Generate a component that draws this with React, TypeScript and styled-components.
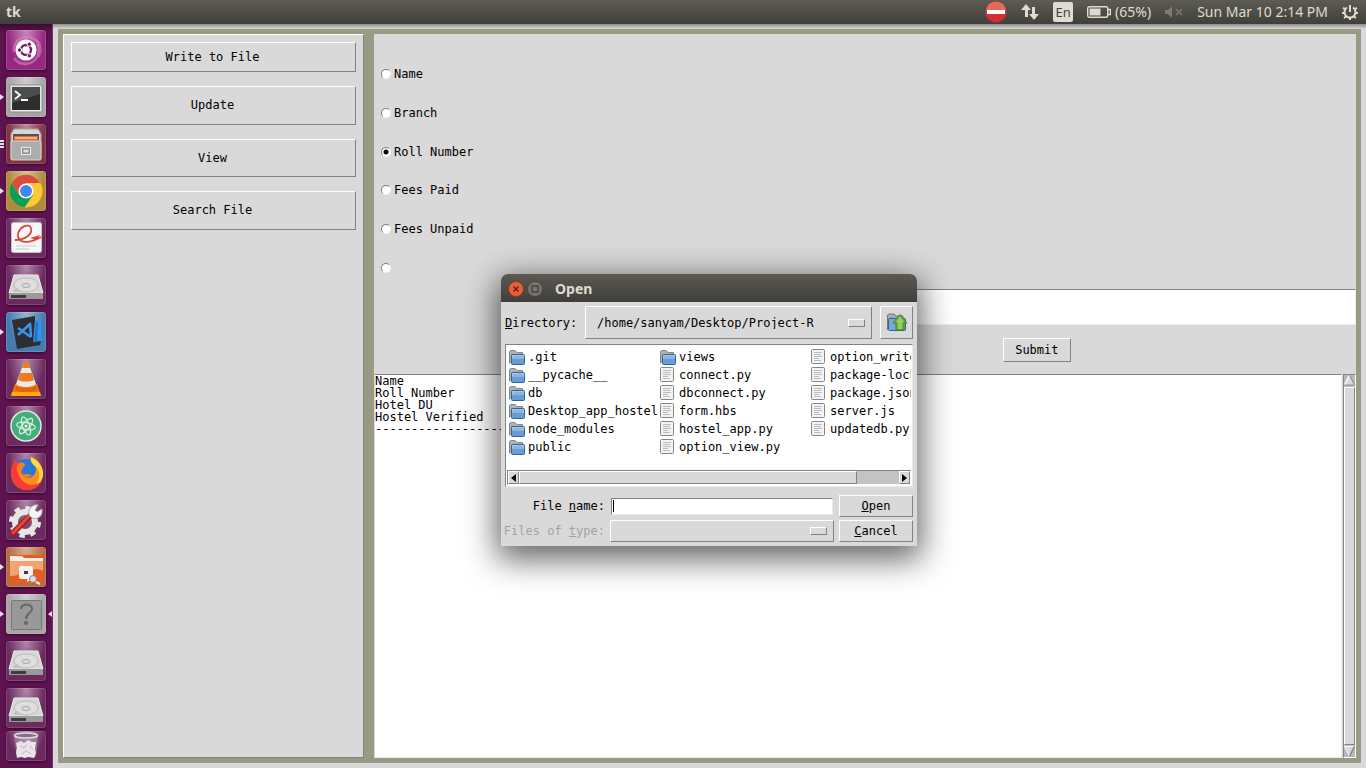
import React from 'react';
import styled, { createGlobalStyle, css } from 'styled-components';

const face = '#d9d9d9';
const light = '#ffffff';
const dark = '#828282';
const olive = '#999985';
const mono = '"DejaVu Sans Mono", "Liberation Mono", monospace';
const ui = '"Noto Sans", "Open Sans", sans-serif';

const GlobalStyle = createGlobalStyle`
  * { box-sizing: border-box; }
  body { margin: 0; background: ${face}; color: #000; font: 12px/12px ${mono}; overflow: hidden; }
  button, input, select, textarea { font: inherit; color: inherit; margin: 0; padding: 0; border: 0; border-radius: 0; outline: none; }
  ul { list-style: none; margin: 0; padding: 0; }
`;

const raised = css`
  border: 1px solid;
  border-color: ${light} ${dark} ${dark} ${light};
`;
const sunken = css`
  border: 1px solid;
  border-color: ${dark} #ebebeb #ebebeb ${dark};
`;

const Screen = styled.div`
  position: relative;
  display: flex;
  flex-direction: column;
  height: 100vh;
`;

/* ---------- top panel ---------- */

const TopBar = styled.header`
  display: flex;
  align-items: center;
  justify-content: space-between;
  flex: none;
  height: 24px;
  padding: 0 8px 0 6px;
  color: #dfdbd2;
  font: 14px/24px ${ui};
  background: linear-gradient(#5d5b54, #403f3a);
`;
const AppName = styled.strong`
  font-weight: 700;
`;
const Indicators = styled.div`
  display: flex;
  align-items: center;
  gap: 14px;
  svg { display: block; }
`;
const Indicator = styled.button`
  display: flex;
  align-items: center;
  gap: 4px;
  height: 24px;
  background: none;
`;
const Lang = styled.span`
  width: 20px;
  height: 20px;
  border-radius: 2px;
  background: #dfdbd2;
  color: #45443f;
  font-size: 13px;
  line-height: 20px;
  text-align: center;
`;

/* ---------- launcher ---------- */

const Desktop = styled.div`
  display: flex;
  flex: 1;
  min-height: 0;
`;
const Launcher = styled.nav`
  flex: none;
  width: 53px;
  padding: 6px 0 0 6px;
  overflow: hidden;
  background: linear-gradient(#3d0a35, #5f1250 8px);
  border-right: 1px solid #743265;
`;
const LauncherList = styled.ul`
  display: flex;
  flex-direction: column;
  gap: 7px;
  margin-bottom: 3px;
`;
const LauncherItem = styled.li`
  position: relative;
  height: 40px;
`;
const Tile = styled.button<{ $tint: string; $short?: boolean }>`
  display: block;
  width: 40px;
  height: ${(p) => (p.$short ? 30 : 40)}px;
  border-radius: 3px;
  overflow: hidden;
  box-shadow: inset 0 0 0 1px rgba(255, 255, 255, 0.14), 0 1px 3px rgba(0, 0, 0, 0.5);
  background: radial-gradient(ellipse at 50% 0, rgba(255, 255, 255, 0.45), rgba(255, 255, 255, 0) 65%), ${(p) => p.$tint};
  svg { display: block; }
`;
const Pip = styled.span<{ $side: 'left' | 'right' }>`
  position: absolute;
  top: 17px;
  ${(p) => (p.$side === 'left' ? 'left: -6px;' : 'right: 0;')}
  border: solid transparent;
  border-width: 3px 0;
  ${(p) => (p.$side === 'left' ? 'border-left: 4px solid #e6dfe4;' : 'border-right: 4px solid #e6dfe4;')}
`;
const Bars = styled.span`
  position: absolute;
  top: 16px;
  left: -6px;
  width: 4px;
  height: 8px;
  background: repeating-linear-gradient(#e6dfe4 0 2px, transparent 2px 3px);
`;

/* ---------- main window ---------- */

const Main = styled.main`
  display: flex;
  flex: 1;
  min-width: 0;
  padding: 5px;
  background: linear-gradient(#8d8d8d, ${face} 5px);
`;
const Frame = styled.div`
  display: flex;
  flex: 1;
  gap: 10px;
  min-width: 0;
  padding: 5px;
  background: ${olive};
`;
const SidePanel = styled.section`
  ${raised}
  display: flex;
  flex-direction: column;
  gap: 14px;
  flex: none;
  width: 301px;
  padding: 7px;
  background: ${face};
`;
const TkButton = styled.button<{ $h: number; $w?: number }>`
  ${raised}
  flex: none;
  height: ${(p) => p.$h}px;
  ${(p) => p.$w && `width: ${p.$w}px;`}
  background: ${face};
  text-align: center;
  text-underline-offset: 1px;
`;
const SideButton = styled(TkButton)`
  padding: 0 2px 1px 0;
`;
const Content = styled.section`
  display: flex;
  flex-direction: column;
  flex: 1;
  min-width: 0;
  padding-top: 21px;
  background: ${face};
`;
const Choices = styled.div`
  display: flex;
  flex-direction: column;
  flex: none;
  height: 232px;
  margin-bottom: 2px;
  padding: 0 7px;
`;
const Choice = styled.label`
  display: flex;
  align-items: center;
  gap: 3px;
  flex: 1;
`;
const Radio = styled.input`
  appearance: none;
  width: 10px;
  height: 10px;
  border: 1px solid;
  border-color: ${dark} #f4f4f4 #f4f4f4 ${dark};
  border-radius: 50%;
  background: ${light};
  &:checked { background: radial-gradient(circle, #000 2px, ${light} 3px); }
`;
const Query = styled.form`
  display: flex;
  flex-direction: column;
  align-items: center;
  gap: 13px;
  width: 65%;
  margin-left: auto;
  padding-bottom: 12px;
`;
const Entry = styled.input`
  ${sunken}
  background: ${light};
`;
const QueryEntry = styled(Entry)`
  width: 100%;
  height: 36px;
`;
const Results = styled.div`
  display: flex;
  flex: 1;
  gap: 1px;
  min-height: 0;
  padding-left: 1px;
`;
const Output = styled.textarea`
  ${sunken}
  border-left: 0;
  flex: 1;
  min-width: 0;
  resize: none;
  overflow: hidden;
  background: ${light};
`;

const Scroll = styled.div<{ $across?: boolean }>`
  display: flex;
  flex-direction: ${(p) => (p.$across ? 'row' : 'column')};
  flex: none;
  gap: 1px;
  ${(p) => (p.$across ? 'height: 15px;' : 'width: 13px;')}
  border: 1px solid;
  border-color: ${dark} ${light} ${light} ${dark};
  background: #c3c3c3;
`;
const Arrow = styled.button`
  flex: none;
  display: flex;
  align-items: center;
  justify-content: center;
  background: #b8b8b8;
`;
const RaisedArrow = styled(Arrow)`
  ${raised}
  width: 11px;
  background: ${face};
`;
const Thumb = styled.div<{ $size: number }>`
  ${raised}
  flex: 0 1 ${(p) => p.$size}%;
  background: ${face};
`;
const Track = styled.div`
  display: flex;
  flex: 1;
`;

/* ---------- file dialog ---------- */

const Dialog = styled.div`
  position: absolute;
  left: 501px;
  top: 274px;
  width: 416px;
  border-radius: 7px 7px 0 0;
  background: ${face};
  box-shadow: 0 9px 32px 4px rgba(0, 0, 0, 0.62);
`;
const TitleBar = styled.div`
  display: flex;
  align-items: center;
  gap: 3px;
  height: 28px;
  padding: 2px 7px 0;
  border-radius: 7px 7px 0 0;
  color: #dfdbd2;
  background: linear-gradient(#5b5952, #3f3e39);
`;
const Title = styled.h1`
  margin: 0 0 0 9px;
  font: 700 14px/26px ${ui};
`;
const WindowButton = styled.button`
  width: 16px;
  height: 16px;
  background: none;
  svg { display: block; }
`;
const DialogBody = styled.div`
  display: flex;
  flex-direction: column;
  padding: 4px;
  text-underline-offset: 1px;
`;
const DirectoryRow = styled.div`
  display: flex;
  align-items: center;
  margin-bottom: 5px;
`;
const DirectoryLabel = styled.label`
  width: 80px;
  white-space: nowrap;
`;
const MenuBox = styled.div<{ $h: number; $pad: number }>`
  ${raised}
  display: flex;
  align-items: center;
  flex: 1;
  min-width: 0;
  height: ${(p) => p.$h}px;
  padding: 0 6px 0 ${(p) => p.$pad}px;
  &::after {
    ${raised}
    content: '';
    flex: none;
    width: 15px;
    height: 6px;
  }
`;
const Menu = styled.select`
  appearance: none;
  flex: 1;
  min-width: 0;
  height: 100%;
  background: transparent;
`;
const UpButton = styled(TkButton)`
  display: flex;
  align-items: center;
  justify-content: center;
  margin-left: 8px;
`;
const ListBox = styled.div`
  ${sunken}
  display: flex;
  flex-direction: column;
  height: 143px;
  padding: 3px 1px 1px 3px;
  margin-bottom: 8px;
  background: ${light};
`;
const Files = styled.ul`
  display: grid;
  grid-template-rows: repeat(6, 18px);
  grid-auto-flow: column;
  grid-auto-columns: 151px;
  flex: 1;
  overflow: hidden;
`;
const FileItem = styled.li`
  display: flex;
  align-items: center;
  gap: 2px;
  white-space: nowrap;
  svg { flex: none; display: block; }
`;
const FileScroll = styled(Scroll)`
  margin-left: -2px;
  gap: 0;
`;
const Fields = styled.div`
  display: grid;
  grid-template-columns: 100px 1fr 74px;
  column-gap: 5px;
  row-gap: 3px;
  align-items: center;
`;
const FieldLabel = styled.label<{ $muted?: boolean }>`
  justify-self: end;
  white-space: nowrap;
  ${(p) => p.$muted && 'color: #a3a3a3;'}
`;
const NameBox = styled.div`
  ${sunken}
  display: flex;
  align-items: center;
  height: 17px;
  margin: 0 1px;
  padding: 1px;
  background: ${light};
`;
const Caret = styled.span`
  width: 1px;
  height: 12px;
  background: #000;
`;
const NameInput = styled.input`
  flex: 1;
  min-width: 0;
  background: transparent;
`;

/* ---------- drawings ---------- */

const Svg = ({ w = 40, h = 40, box, children }: { w?: number; h?: number; box?: string; children: React.ReactNode }) => (
  <svg width={w} height={h} viewBox={box ?? `0 0 ${w} ${h}`} fill="none" aria-hidden="true">{children}</svg>
);

const UbuntuIcon = () => (
  <Svg>
    <path d="M8 22C7 10 18 4 28 9c7 3 8 12 4 18M31 14c5 9-1 19-11 20-6 0-10-3-12-6" stroke="#d58cc4" strokeWidth="2.500" opacity=".55" />
    <circle cx="20" cy="20" r="10.500" fill="#fff" />
    <circle cx="20" cy="20" r="5" stroke="#7a1c68" strokeWidth="2.400" />
    <g fill="#7a1c68" stroke="#fff">
      <circle cx="13.500" cy="20" r="2.200" /><circle cx="23.300" cy="14.200" r="2.200" /><circle cx="23.300" cy="25.800" r="2.200" />
    </g>
  </Svg>
);
const TerminalIcon = () => (
  <Svg>
    <rect x="4" y="8" width="32" height="27" rx="1" fill="#e8e8e8" stroke="#8d8d8d" />
    <rect x="6" y="10" width="28" height="23" fill="#2c2e2c" />
    <path d="M6 10h28v7L6 26z" fill="#4b4e4b" />
    <path d="M9 14l5 4-5 4M15 23h7" stroke="#fff" strokeWidth="1.800" />
  </Svg>
);
const FilesIcon = () => (
  <Svg>
    <path d="M8 5h24l3 5v24H5V10z" fill="#d6d6d4" stroke="#a3a3a1" />
    <rect x="7" y="10" width="26" height="9" fill="#58514c" />
    <path d="M8 12h24v6H8z" fill="#e8662a" /><path d="M9 14h22" stroke="#fff" />
    <rect x="5" y="17" width="30" height="19" rx="1" fill="#adadab" stroke="#d4d4d2" />
    <rect x="15.500" y="23.500" width="9" height="7" fill="#8c8c8a" stroke="#eee" />
    <rect x="17.500" y="25.500" width="5" height="3" fill="#ddd" />
  </Svg>
);
const ChromeIcon = () => (
  <Svg>
    <circle cx="20" cy="20" r="16.500" fill="#fcc934" />
    <path d="M20 12h14.300A16.500 16.500 0 0 0 5.700 11.800L13 24z" fill="#dd4b3e" />
    <path d="M5.700 11.800A16.500 16.500 0 0 0 18.500 36.400L27 24l-14 0z" fill="#109d58" />
    <circle cx="20" cy="20" r="7.500" fill="#fff" /><circle cx="20" cy="20" r="6" fill="#4285f4" />
  </Svg>
);
const ReaderIcon = () => (
  <Svg>
    <rect x="5.500" y="4.500" width="30" height="30" rx="2" fill="#f7f7f7" stroke="#c9bcc7" />
    <path d="M9 22C19 22 27 16 25 10c-2-5-11-2-13 6-1 10 11 10 23 3" stroke="#d8473b" strokeWidth="1.800" />
    <path d="M24 20l10-3-3 5z" fill="#d8473b" />
    <path d="M10 28h20M10 31h13" stroke="#cbcbcb" />
  </Svg>
);
const DriveIcon = () => (
  <Svg>
    <path d="M8 10h24l5 18H3z" fill="#d6d6d6" stroke="#eee" />
    <path d="M3 28h34v6H3z" fill="#9a9a9a" /><path d="M5 30h15v3H5z" fill="#3d3d3d" />
    <ellipse cx="20" cy="20" rx="12" ry="7" fill="#dedede" stroke="#bdbdbd" />
    <ellipse cx="20" cy="20.500" rx="4" ry="2" stroke="#a6a6a6" />
    <path d="M12 23l-4 3h7" stroke="#b5b5b5" />
  </Svg>
);
const CodeIcon = () => (
  <Svg>
    <path d="M29 8l6 1 1 20-8 5z" fill="#2f93ee" />
    <path d="M6 8l23-4v4l-2 22 8-1-1 4-23 4z" fill="#2d2e31" />
    <path d="M30 10h2l-1 19-3 2z" fill="#1c74c8" />
    <path d="M12 16l13 9M12 23l12-11 1 13" stroke="#3b94e8" strokeWidth="2.600" strokeLinejoin="round" />
  </Svg>
);
const ConeIcon = () => (
  <Svg>
    <path d="M9 25h22l4 12H5z" fill="#f0790f" /><path d="M6 33h28l1 4H5z" fill="#ffa90a" />
    <path d="M18 3h4l8 22c-3 4-17 4-20 0z" fill="#e9e9e9" />
    <path d="M18 3h4l2 6h-8zM14 14h12l2 7c-4 2-12 2-16 0z" fill="#ef7c1a" />
    <path d="M10 27c4 3 16 3 20 0l1 4c-5 3-17 3-22 0z" fill="#e2620d" />
  </Svg>
);
const AtomIcon = () => (
  <Svg>
    <circle cx="20" cy="20" r="15" fill="#45ad79" stroke="#e3e9e4" strokeWidth="1.500" />
    <g stroke="#d9f2e3" strokeWidth="1.200">
      <ellipse cx="20" cy="20" rx="9.500" ry="3.500" transform="rotate(10 20 20)" />
      <ellipse cx="20" cy="20" rx="9.500" ry="3.500" transform="rotate(70 20 20)" />
      <ellipse cx="20" cy="20" rx="9.500" ry="3.500" transform="rotate(130 20 20)" />
    </g>
    <circle cx="20" cy="20" r="1.500" fill="#fff" />
  </Svg>
);
const FirefoxIcon = () => (
  <Svg>
    <circle cx="20" cy="17" r="11" fill="#2878d8" />
    <path d="M25 4c8 3 12 9 12 17 0 9-7 16-16 16S5 30 5 20c0-5 2-9 4-13l3 4c3-2 6-1 7 1l-3 4-1 3c3 6 8 8 12 4 4-4 4-9 0-14-2-2-3-3-2-5z" fill="#ff8f1c" />
    <path d="M9 7C5 13 4 20 6 26c3 8 10 12 18 11 5-1 9-4 11-8-6 4-13 4-18-1-5-4-6-11-4-16l-1-1z" fill="#f93a37" />
    <path d="M12 11c4-3 7-1 7 1l-3 4-1 3c1 3 3 3 6 2l5 1c-2 3-7 4-11 1-5-4-5-8-3-12z" fill="#ff7b1c" />
    <path d="M25 4c8 3 13 12 12 18-1 5-3 7-6 9 3-7 3-13-1-17-4-3-6-6-5-10z" fill="#ffd93e" />
  </Svg>
);
const SettingsIcon = () => (
  <Svg>
    <circle cx="19" cy="22" r="13" stroke="#e6e6e6" strokeWidth="6" strokeDasharray="5 5.200" />
    <circle cx="19" cy="22" r="10" stroke="#e6e6e6" strokeWidth="6" />
    <path d="M7 33L25 15" stroke="#a81b18" strokeWidth="6" strokeLinecap="round" />
    <path d="M7 33L24 15" stroke="#e2483c" strokeWidth="3" strokeLinecap="round" />
    <path d="M23 15c-1-6 3-11 9-10l-3 5 2 2 5-3c1 7-4 11-10 9z" fill="#f4f4f4" stroke="#aaa" />
  </Svg>
);
const ShareIcon = () => (
  <Svg>
    <rect x="4" y="8" width="33" height="28" fill="#e95b20" />
    <path d="M4 14h33v10C26 18 15 30 4 29z" fill="#f3a270" />
    <path d="M4 9h12l2 2h19v3H4z" fill="#f7eee9" />
    <rect x="13" y="19" width="14" height="13" rx="2" fill="#f4f1ee" /><path d="M18 24h4v3h-4z" fill="#3b3b36" />
    <path d="M21 34l5-3M30 35l4 2" stroke="#f4f1ee" strokeWidth="2" /><circle cx="27" cy="32" r="3.500" fill="#ddd" stroke="#888" />
  </Svg>
);
const UnknownIcon = () => (
  <Svg>
    <rect x="5.500" y="6.500" width="30" height="29" rx="1" fill="#999" stroke="#777" />
    <path d="M15 15c0-6 11-6 11 0 0 4-6 4-6 10" stroke="#666" strokeWidth="2" /><circle cx="20" cy="29" r="2" fill="#666" />
  </Svg>
);
const TrashIcon = () => (
  <Svg h={30}>
    <path d="M8 5h24l-2 21H11z" fill="#c9b4c5" opacity=".4" />
    <ellipse cx="20" cy="4.500" rx="11.500" ry="2.500" fill="#8d6b87" stroke="#ddd" strokeWidth="1.500" />
    <path d="M10 12l5-2 3 2 4-3 4 2 4 0-1 7 1 4-2 5-6-1-3 1-4-1-4 1-1-6 1-4z" fill="#e9e4e8" />
    <path d="M14 15l4 2 3-3M16 23l4-3 5 3M24 15l3 3" stroke="#c3b3c0" />
  </Svg>
);

const FolderIcon = () => (
  <Svg w={17} h={16} box="0 -1 17 16">
    <path d="M.5 13.500v-12L2 .5h4l2 2h5.500v4" fill="#b0b0ae" stroke="#858583" />
    <rect x="2.500" y="4.500" width="13" height="10" rx="1" fill="#6b9dd2" stroke="#2a64a6" />
    <path d="M3 5h12v4H3z" fill="#8bb4de" />
    <path d="M3.500 8V5.500h11V8" stroke="#a9c7e6" />
  </Svg>
);
const PageIcon = () => (
  <Svg w={17} h={16}>
    <rect x=".5" y=".5" width="13" height="14" rx="1" fill="#f3f3f3" stroke="#868686" />
    <path d="M3 3.500h8M3 5.500h7M3 7.500h8M3 9.500h5M3 11.500h7" stroke="#bcbcbc" />
  </Svg>
);
const UpIcon = () => (
  <Svg w={22} h={20}>
    <path d="M1.500 17V2L3 1h5l2 2h7v6" fill="#aaa" stroke="#777" />
    <rect x="2.500" y="5.500" width="17" height="12" rx="1" fill="#78a8da" stroke="#2a64a6" />
    <path d="M14 1.500l7 8.500h-3v7h-8v-7H7z" fill="#70b33a" stroke="#46821b" />
    <path d="M14 3.500L18 9h-2v7h-4V9h-2z" fill="#95cf61" />
  </Svg>
);

type App = { name: string; tint: string; icon: React.ReactNode; running?: boolean; many?: boolean; active?: boolean };
const plum = '#6d2a60';
const apps: App[] = [
  { name: 'Dash', tint: '#972880', icon: <UbuntuIcon /> },
  { name: 'Terminal', tint: '#a9a3a8', icon: <TerminalIcon />, running: true },
  { name: 'Files', tint: '#813342', icon: <FilesIcon />, many: true },
  { name: 'Chrome', tint: '#b08b3d', icon: <ChromeIcon />, running: true },
  { name: 'Document Viewer', tint: plum, icon: <ReaderIcon /> },
  { name: 'Drive 1', tint: plum, icon: <DriveIcon /> },
  { name: 'Code', tint: '#447cae', icon: <CodeIcon />, running: true },
  { name: 'Media Player', tint: plum, icon: <ConeIcon /> },
  { name: 'Atom', tint: plum, icon: <AtomIcon /> },
  { name: 'Firefox', tint: plum, icon: <FirefoxIcon /> },
  { name: 'System Settings', tint: plum, icon: <SettingsIcon /> },
  { name: 'Shared Files', tint: '#b66c43', icon: <ShareIcon />, running: true },
  { name: 'tk', tint: '#aaa4a9', icon: <UnknownIcon />, running: true, active: true },
  { name: 'Drive 2', tint: plum, icon: <DriveIcon /> },
  { name: 'Drive 3', tint: plum, icon: <DriveIcon /> },
];

const folders = ['.git', '__pycache__', 'db', 'Desktop_app_hostel', 'node_modules', 'public', 'views'];
const files = ['connect.py', 'dbconnect.py', 'form.hbs', 'hostel_app.py', 'option_view.py', 'option_write', 'package-lock', 'package.json', 'server.js', 'updatedb.py'];
const choices = ['Name', 'Branch', 'Roll Number', 'Fees Paid', 'Fees Unpaid', ''];
const output = ['Name', 'Roll Number', 'Hotel DU', 'Hostel Verified', '----------------------------------------'].join('\n');

export default function App() {
  return (
    <Screen>
      <GlobalStyle />
      <TopBar>
        <AppName>tk</AppName>
        <Indicators>
          <Indicator aria-label="Do not disturb">
            <Svg w={22} h={22}>
              <circle cx="11" cy="11" r="10.500" fill="#d32f35" />
              <path d="M1 10a10 9.500 0 0 1 20 0z" fill="#e8685c" />
              <rect x="2" y="9" width="18" height="4" fill="#fff" />
            </Svg>
          </Indicator>
          <Indicator aria-label="Network">
            <Svg w={18} h={18}>
              <path d="M5 1l5 6H7v7H4V7H0zM13 17l-5-6h3V4h3v7h4z" fill="#dfdbd2" />
            </Svg>
          </Indicator>
          <Indicator aria-label="Keyboard layout"><Lang>En</Lang></Indicator>
          <Indicator>
            <Svg w={24} h={14}>
              <rect x=".7" y="1.700" width="20" height="10.600" rx="1.500" stroke="#dfdbd2" strokeWidth="1.400" />
              <rect x="2.500" y="3.500" width="11" height="7" fill="#dfdbd2" />
              <path d="M21 4.500h2.300v5H21" stroke="#dfdbd2" strokeWidth="1.400" />
            </Svg>
            (65%)
          </Indicator>
          <Indicator aria-label="Sound">
            <Svg w={18} h={14}>
              <path d="M0 5h3l4-4v12L3 9H0z" fill="#7d7b75" /><path d="M11 4l6 6M17 4l-6 6" stroke="#7d7b75" strokeWidth="1.600" />
            </Svg>
          </Indicator>
          <Indicator>Sun Mar 10 2:14 PM</Indicator>
          <Indicator aria-label="Session">
            <Svg w={16} h={16}>
              <path d="M5 3.500a5.500 5.500 0 1 0 6 0" stroke="#dfdbd2" strokeWidth="2" />
              <path d="M8 1v7M1 4l2 1M15 4l-2 1M0 9h2M14 9h2M2 14l2-1.500M14 14l-2-1.500M8 13.500V16" stroke="#dfdbd2" strokeWidth="2" />
            </Svg>
          </Indicator>
        </Indicators>
      </TopBar>

      <Desktop>
        <Launcher aria-label="Launcher">
          <LauncherList>
            {apps.map((a) => (
              <LauncherItem key={a.name}>
                <Tile $tint={a.tint} aria-label={a.name}>{a.icon}</Tile>
                {a.running && <Pip $side="left" />}
                {a.many && <Bars />}
                {a.active && <Pip $side="right" />}
              </LauncherItem>
            ))}
          </LauncherList>
          <Tile $tint={plum} $short aria-label="Trash"><TrashIcon /></Tile>
        </Launcher>

        <Main>
          <Frame>
            <SidePanel>
              <SideButton $h={30}>Write to File</SideButton>
              <SideButton $h={39}>Update</SideButton>
              <SideButton $h={38}>View</SideButton>
              <SideButton $h={39}>Search File</SideButton>
            </SidePanel>
            <Content>
              <Choices role="radiogroup" aria-label="Search by">
                {choices.map((c) => (
                  <Choice key={c || 'other'}>
                    <Radio type="radio" name="field" defaultChecked={c === 'Roll Number'} aria-label={c || 'Other'} />
                    {c}
                  </Choice>
                ))}
              </Choices>
              <Query onSubmit={(e) => e.preventDefault()}>
                <QueryEntry aria-label="Search value" />
                <TkButton $h={24} $w={68}>Submit</TkButton>
              </Query>
              <Results>
                <Output aria-label="Results" readOnly value={output} wrap="off" />
                <Scroll>
                  <Arrow aria-label="Scroll up">
                    <Svg w={11} h={11} box="0 0 12 12"><path d="M6 0L0 11.500h12z" fill={face} /><path d="M6 0L.5 11" stroke="#fff" strokeWidth="1.500" /><path d="M6 0l5.500 11H0" stroke={dark} /></Svg>
                  </Arrow>
                  <Track><Thumb $size={100} /></Track>
                  <Arrow aria-label="Scroll down">
                    <Svg w={11} h={11} box="0 0 12 12"><path d="M0 0h12L6 12z" fill={face} /><path d="M12 .5H.5L6 11" stroke="#fff" /><path d="M11.500 0L6 11.500" stroke={dark} strokeWidth="1.500" /></Svg>
                  </Arrow>
                </Scroll>
              </Results>
            </Content>
          </Frame>
        </Main>
      </Desktop>

      <Dialog role="dialog" aria-labelledby="dialog-title">
        <TitleBar>
          <WindowButton aria-label="Close">
            <Svg w={16} h={16}>
              <circle cx="8" cy="8" r="7.500" fill="#ea5f35" stroke="#8d3a20" /><path d="M5.500 5.500l5 5M10.500 5.500l-5 5" stroke="#4a2217" strokeWidth="1.200" />
            </Svg>
          </WindowButton>
          <WindowButton aria-label="Maximize">
            <Svg w={16} h={16}>
              <circle cx="8" cy="8" r="7.500" fill="#77756e" stroke="#4a4944" /><rect x="5" y="5" width="6" height="6" stroke="#3a3935" strokeWidth="1.200" />
            </Svg>
          </WindowButton>
          <Title id="dialog-title">Open</Title>
        </TitleBar>
        <DialogBody>
          <DirectoryRow>
            <DirectoryLabel htmlFor="directory"><u>D</u>irectory:</DirectoryLabel>
            <MenuBox $h={33} $pad={11}>
              <Menu id="directory"><option>/home/sanyam/Desktop/Project-R</option></Menu>
            </MenuBox>
            <UpButton $h={33} $w={33} aria-label="Parent directory"><UpIcon /></UpButton>
          </DirectoryRow>
          <ListBox>
            <Files>
              {folders.map((f) => <FileItem key={f}><FolderIcon />{f}</FileItem>)}
              {files.map((f) => <FileItem key={f}><PageIcon />{f}</FileItem>)}
            </Files>
            <FileScroll $across>
              <RaisedArrow aria-label="Scroll left"><Svg w={5} h={8}><path d="M5 0v8L0 4z" fill="#000" /></Svg></RaisedArrow>
              <Track><Thumb $size={89} /></Track>
              <RaisedArrow aria-label="Scroll right"><Svg w={5} h={8}><path d="M0 0v8l5-4z" fill="#000" /></Svg></RaisedArrow>
            </FileScroll>
          </ListBox>
          <Fields>
            <FieldLabel htmlFor="file-name">File <u>n</u>ame:</FieldLabel>
            <NameBox><Caret /><NameInput id="file-name" /></NameBox>
            <TkButton $h={22}><u>O</u>pen</TkButton>
            <FieldLabel htmlFor="file-type" $muted>Files of <u>t</u>ype:</FieldLabel>
            <MenuBox $h={22} $pad={4}><Menu id="file-type" disabled /></MenuBox>
            <TkButton $h={22}><u>C</u>ancel</TkButton>
          </Fields>
        </DialogBody>
      </Dialog>
    </Screen>
  );
}
